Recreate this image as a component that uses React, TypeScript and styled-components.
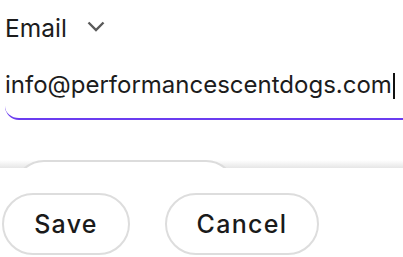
import styled, { createGlobalStyle } from "styled-components";

const GlobalStyle = createGlobalStyle`
  html, body {
    margin: 0;
    padding: 0;
    background: #fff;
  }
  body {
    font-family: Inter, "Liberation Sans", Arial, sans-serif;
    color: #1c1c1c;
    overflow: hidden;
  }
`;

const Page = styled.div`
  width: 403px;
  height: 257px;
  display: flex;
  flex-direction: column;
  overflow: hidden;
`;

const Form = styled.div`
  padding: 12px 0 0 5px;
  display: flex;
  flex-direction: column;
`;

const FieldType = styled.div`
  display: flex;
  align-items: center;
  gap: 20px;
  height: 32px;
  font-size: 24.5px;
`;

const Chevron = styled.svg`
  width: 18px;
  height: 11px;
  margin-top: -4px;
`;

const InputRow = styled.div`
  margin-top: 26px;
  height: 48px;
  display: flex;
  align-items: flex-start;
  border-bottom: 2px solid #6b3cf0;
  border-bottom-left-radius: 14px;
`;

const Value = styled.span`
  font-size: 24px;
  line-height: 30px;
`;

const Caret = styled.span`
  display: inline-block;
  width: 2px;
  height: 26px;
  margin-top: 3px;
  margin-left: 1px;
  background: #111;
`;

const Peek = styled.div`
  margin-top: 40px;
  height: 8px;
  overflow: hidden;
  background: linear-gradient(to bottom, #fff, #e6e6e6);
  padding-left: 14px;
`;

const PeekPill = styled.div`
  width: 222px;
  height: 60px;
  border: 2px solid #dcdcdc;
  border-radius: 31px;
  background: #fff;
  box-sizing: border-box;
`;

const Footer = styled.div`
  background: #fff;
  padding: 25px 0 0 2px;
  display: flex;
  gap: 35px;
`;

const Button = styled.button<{ $w: number }>`
  width: ${(p) => p.$w}px;
  height: 62px;
  border: 2px solid #dddddd;
  border-radius: 31px;
  background: #fff;
  font-family: Inter, "Liberation Sans", Arial, sans-serif;
  font-size: 25px;
  font-weight: 500;
  letter-spacing: 1.3px;
  color: #1a1a1a;
  padding: 0;
`;

export default function App() {
  return (
    <Page>
      <GlobalStyle />
      <Form>
        <FieldType>
          <span>Email</span>
          <Chevron viewBox="0 0 18 11">
            <path d="M1.5 1.5 L9 9 L16.5 1.5" fill="none" stroke="#5a5a5a" strokeWidth="2.4" />
          </Chevron>
        </FieldType>
        <InputRow>
          <Value>info@performancescentdogs.com</Value>
          <Caret />
        </InputRow>
      </Form>
      <Peek>
        <PeekPill />
      </Peek>
      <Footer>
        <Button $w={128}>Save</Button>
        <Button $w={154}>Cancel</Button>
      </Footer>
    </Page>
  );
}
